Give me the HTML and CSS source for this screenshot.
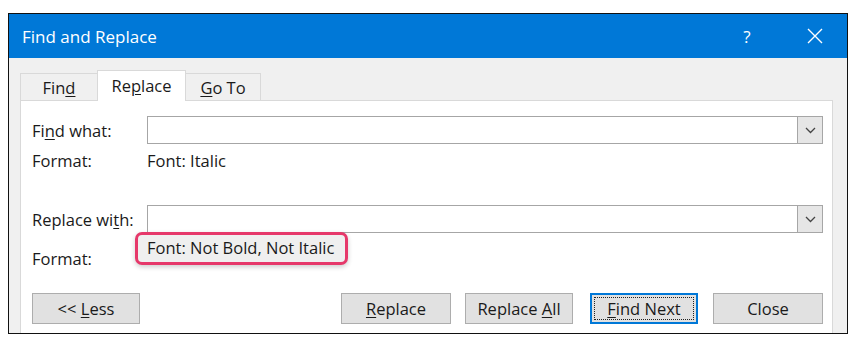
FILE: index.html
```html
<!DOCTYPE html>
<html lang="en">
<head>
  <meta charset="UTF-8">
  <title>Find and Replace</title>
  <link rel="stylesheet" href="styles.css">
</head>
<body>
  <div class="dialog">
    <div class="titlebar">
      <span class="title">Find and Replace</span>
      <span class="help">?</span>
      <span class="close-x">
        <svg width="16" height="16" viewBox="0 0 16 16"><path d="M1 1 L15 15 M15 1 L1 15" stroke="#fff" stroke-width="1.4" fill="none"/></svg>
      </span>
    </div>

    <div class="content">
      <div class="tabs">
        <div class="tab tab-find">Fin<u>d</u></div>
        <div class="tab tab-replace active">Re<u>p</u>lace</div>
        <div class="tab tab-goto"><u>G</u>o To</div>
      </div>

      <div class="panel">
        <div class="field-row">
          <label class="label">Fi<u>n</u>d what:</label>
          <div class="combo">
            <div class="combo-input"></div>
            <div class="combo-btn">
              <svg width="11" height="7" viewBox="0 0 11 7"><path d="M1 1 L5.5 5.5 L10 1" stroke="#444" stroke-width="1.3" fill="none"/></svg>
            </div>
          </div>
        </div>
        <div class="format-row">
          <span class="label">Format:</span>
          <span class="value">Font: Italic</span>
        </div>

        <div class="field-row replace-row">
          <label class="label">Replace wi<u>t</u>h:</label>
          <div class="combo">
            <div class="combo-input"></div>
            <div class="combo-btn">
              <svg width="11" height="7" viewBox="0 0 11 7"><path d="M1 1 L5.5 5.5 L10 1" stroke="#444" stroke-width="1.3" fill="none"/></svg>
            </div>
          </div>
        </div>
        <div class="format-row format-marked">
          <span class="label">Format:</span>
          <span class="value highlight">Font: Not Bold, Not Italic</span>
        </div>

        <div class="buttons">
          <button class="btn btn-less">&lt;&lt; <u>L</u>ess</button>
          <div class="spacer"></div>
          <button class="btn btn-replace"><u>R</u>eplace</button>
          <button class="btn btn-all">Replace <u>A</u>ll</button>
          <button class="btn btn-default"><span class="focus"><u>F</u>ind Next</span></button>
          <button class="btn btn-close">Close</button>
        </div>
      </div>
    </div>
  </div>
</body>
</html>
```

FILE: styles.css
```css
body {
  margin: 0;
  background-color: #ffffff;
  font-family: 'Open Sans', 'Noto Sans', sans-serif;
  font-size: 16.5px;
  color: #1a1a1a;
}

u {
  text-decoration-thickness: 1px;
  text-underline-offset: 2px;
}

.dialog {
  margin: 13px 0 0 8px;
  width: 838px;
  height: 319px;
  border: 1px solid #111;
  background-color: #f0f0f0;
  display: flex;
  flex-direction: column;
  overflow: hidden;
}

.titlebar {
  height: 44px;
  background-color: #0078d7;
  color: #fff;
  display: flex;
  align-items: center;
  flex-shrink: 0;
}

.title {
  font-size: 17px;
  margin-left: 13px;
  flex: 1;
}

.help {
  font-size: 17px;
  width: 20px;
  margin-right: 50px;
  text-align: center;
}

.close-x {
  display: flex;
  margin-right: 24px;
  margin-top: -1px;
}

.content {
  flex: 1;
  padding: 12px 14px 0 11px;
  display: flex;
  flex-direction: column;
}

.tabs {
  display: flex;
  align-items: flex-end;
  height: 30px;
  position: relative;
  z-index: 1;
}

.tab {
  height: 27px;
  box-sizing: border-box;
  border: 1px solid #d9d9d9;
  border-bottom: none;
  background-color: #f0f0f0;
  display: flex;
  align-items: center;
  justify-content: center;
}

.tab-find {
  width: 77px;
  border-right: none;
}

.tab-replace {
  width: 89px;
}

.tab-goto {
  width: 75px;
  border-left: none;
}

.tab.active {
  height: 31px;
  background-color: #ffffff;
  margin-bottom: -1px;
  padding-bottom: 2px;
}

.panel {
  flex: 1;
  background-color: #ffffff;
  border: 1px solid #d9d9d9;
  border-bottom: none;
  padding: 15px 9px 0 11px;
}

.field-row {
  display: flex;
  align-items: center;
  height: 28px;
}

.replace-row {
  margin-top: 35px;
}

.label {
  width: 115px;
  flex-shrink: 0;
}

.combo {
  flex: 1;
  display: flex;
  height: 28px;
  box-sizing: border-box;
  border: 1px solid #a6a6a6;
}

.combo-input {
  flex: 1;
  background-color: #fff;
}

.combo-btn {
  width: 24px;
  background-color: #e6e6e6;
  border-left: 1px solid #a6a6a6;
  display: flex;
  align-items: center;
  justify-content: center;
}

.format-row {
  display: flex;
  align-items: center;
  height: 20px;
  margin-top: 6px;
}

.format-marked {
  height: 33px;
  margin-top: -1px;
  align-items: flex-start;
}

.format-marked .label {
  margin-top: 15px;
}

.highlight {
  margin-left: -12px;
  padding: 1px 11px 3px 9px;
  border: 3px solid #e6386a;
  border-radius: 7px;
  background-color: #efefef;
  box-shadow: 0 2px 5px rgba(0, 0, 0, 0.2);
}

.buttons {
  display: flex;
  margin-top: 28px;
}

.spacer {
  flex: 1;
}

.btn {
  width: 110px;
  height: 31px;
  font-family: inherit;
  font-size: 16.5px;
  color: #1a1a1a;
  background-color: #e1e1e1;
  border: 1px solid #adadad;
  padding: 0;
}

.btn-less {
  width: 108px;
}

.btn-all {
  width: 108px;
  margin-left: 14px;
}

.btn-default {
  width: 108px;
  margin-left: 17px;
  border: 2px solid #0078d7;
  padding: 2px;
}

.btn-close {
  margin-left: 15px;
}

.btn-default .focus {
  display: flex;
  align-items: center;
  justify-content: center;
  height: 100%;
  box-sizing: border-box;
  border: 1px dotted #222;
}
```
